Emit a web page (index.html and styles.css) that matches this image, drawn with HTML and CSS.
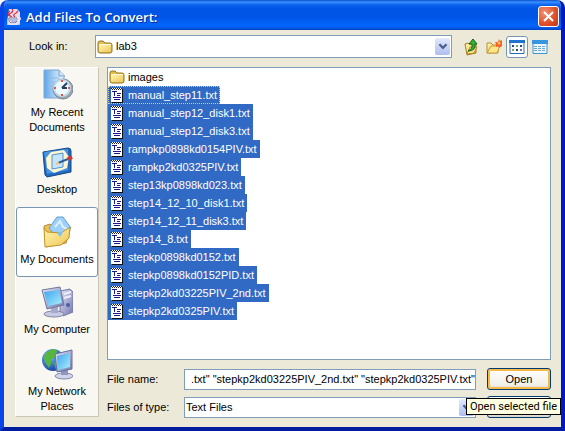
FILE: index.html
```html
<!DOCTYPE html>
<html lang="en">
<head>
<meta charset="utf-8">
<title>Add Files To Convert:</title>
<link rel="stylesheet" href="styles.css">
</head>
<body>
<svg class="defs" aria-hidden="true">
  <defs>
    <linearGradient id="gold" x1="0" y1="0" x2="1" y2="1"><stop offset="0" stop-color="#fff6ae"/><stop offset="1" stop-color="#efc65a"/></linearGradient>
    <linearGradient id="sky" x1="0" y1="0" x2="1" y2="1"><stop offset="0" stop-color="#3fa4ee"/><stop offset="1" stop-color="#a9f0fc"/></linearGradient>
    <linearGradient id="metal" x1="0" y1="0" x2="1" y2="1"><stop offset="0" stop-color="#e4e4f6"/><stop offset="1" stop-color="#7176ae"/></linearGradient>
    <linearGradient id="paper" x1="0" y1="0" x2="1" y2="0"><stop offset="0" stop-color="#5fa5e8"/><stop offset="1" stop-color="#f4faff"/></linearGradient>
    <radialGradient id="earth" cx=".35" cy=".3" r=".75"><stop offset="0" stop-color="#76bff5"/><stop offset="1" stop-color="#103f9d"/></radialGradient>
  </defs>
  <symbol id="folder" viewBox="0 0 16 14">
    <path d="M1 11V3Q1 1 3 1H6L8 3H13Q15 3 15 5V11Q15 13 13 13H3Q1 13 1 11Z" fill="#e4bd4c" stroke="#94762a"/>
    <path d="M2 5H14V11Q14 12 13 12H3Q2 12 2 11Z" fill="url(#gold)"/>
    <path d="M2 4.500H14" stroke="#fffbd4"/>
  </symbol>
  <symbol id="text" viewBox="0 0 14 16">
    <path d="M12 2h1v14H2v-1h10z" fill="#111"/>
    <path d="M1 1h11v14H1z" fill="#fff"/>
    <path d="M1 1h1v1H1zM3 1h1v1H3zM5 1h1v1H5zM7 1h1v1H7zM9 1h1v1H9zM11 1h1v1h-1zM2 2h1v1H2zM4 2h1v1H4zM6 2h1v1H6zM8 2h1v1H8zM10 2h1v1h-1z" fill="#222"/>
    <path d="M2 4h5v1H5v4H4V5H2zM7 6h4v1H7zM7 8h3v1H7zM3 10h8v1H3zM4 12h6v1H4z" fill="#19198c"/>
  </symbol>
  <symbol id="chevron" viewBox="0 0 15 19">
    <path d="M4 7l4 4 4-4" fill="none" stroke="#49618c" stroke-width="2.500"/>
  </symbol>
</svg>
<main class="window">
  <header class="titlebar">
    <svg class="cup" viewBox="0 0 16 16" aria-hidden="true">
      <path d="M3 0h8l3 3v11l-3 2H3l-2-3z" fill="#eed8e2"/>
      <path d="M6 8Q1 6 5 4Q8 2 6 0M9 8Q6 6 10 4L12 2M3 7Q1 4 4 2" fill="none" stroke="#d3304b" stroke-width="1.200"/>
      <path d="M3 9h8v3l-2 2H5l-2-2z" fill="#f4f5fc" stroke="#6f7bb2"/>
      <path d="M11 9h3q1 2-3 3M1 15h13" fill="none" stroke="#e8e9f4" stroke-width="1.500"/>
      <path d="M4 11h6M5 13h5" stroke="#7680b5"/>
    </svg>
    <h1>Add Files To Convert:</h1>
    <button class="close" type="button" aria-label="Close"><svg viewBox="0 0 19 19"><path d="M5 5l9 9M14 5l-9 9" stroke="#fff" stroke-width="2"/></svg></button>
  </header>
  <form class="content">
    <div class="lookin">
      <label for="look">Look in:</label>
      <div class="combo">
        <svg class="folder"><use href="#folder"/></svg>
        <select id="look"><option>lab3</option></select>
        <svg class="arrow"><use href="#chevron"/></svg>
      </div>
      <div class="tools">
        <button type="button" aria-label="Up one level"><svg viewBox="0 0 16 18">
          <path d="M2 6l3-1 1 1h7v9l-9 2z" fill="url(#gold)" stroke="#a37c24"/><path d="M4 16l3-7h7l-3 6z" fill="#ffe889" stroke="#b18a2c"/>
          <path d="M5 13q5-2 4-7H6l4-5 4 5h-2q1 7-7 7z" fill="#35b52e" stroke="#14631a"/>
        </svg></button>
        <button type="button" aria-label="New folder"><svg viewBox="0 0 16 18">
          <path d="M1 15V5h4l2 2h5v8z" fill="url(#gold)" stroke="#b98f32"/><path d="M1 15l4-7h9l-3 7z" fill="#ffe58a" stroke="#c49a3b"/>
          <path d="M13 1l1 2 2-1v6l-3 2-1-2-2 1V6L9 4h3z" fill="#f4622a"/><circle cx="13" cy="5" r="1.500" fill="#ffc35c"/>
        </svg></button>
        <button class="active" type="button" aria-label="List view"><svg viewBox="0 0 16 18">
          <path d="M1 2.500h14v13H1z" fill="#fff" stroke="#236db8"/><path d="M0 2h16v3H0z" fill="#1e74cf"/>
          <path d="M3 7h2v2H3zM11 7h2v2h-2zM7 11h2v2H7z" fill="#26478b"/><path d="M7 7h2v2H7zM3 11h2v2H3z" fill="#71a575"/><path d="M11 11h2v2h-2z" fill="#7b7187"/>
        </svg></button>
        <button type="button" aria-label="Details view"><svg viewBox="0 0 16 18">
          <path d="M1 2.500h14v13H1z" fill="#e9f5ff" stroke="#3e94d6"/><path d="M0 2h16v4H0z" fill="#3796df"/>
          <path d="M2 8.500h12M2 10.500h12M2 12.500h12" stroke="#72a8d0" stroke-dasharray="3 1"/>
        </svg></button>
      </div>
    </div>
    <nav class="places">
      <button type="button"><svg viewBox="0 0 32 32">
        <path d="M3 1h15l5 5v23H3z" fill="url(#paper)" stroke="#81a8d2"/><path d="M18 1v6h6" fill="#d3e6f9" stroke="#71a0d0"/><path d="M7 9h11M7 13h8M7 17h5" stroke="#90bbe4"/>
        <circle cx="22" cy="20" r="10" fill="#9da6b2" stroke="#7d8793"/><circle cx="21" cy="19" r="8" fill="#eefaff" stroke="#c0dbea" stroke-width="2"/>
        <path d="M21 19l5-5M21 19h5" stroke="#263f60" stroke-width="2"/><path d="M21 11v2M21 25v2M13 19h2M27 19h2" stroke="#e35742" stroke-width="2"/>
      </svg><span>My Recent<br>Documents</span></button>
      <button type="button"><svg viewBox="0 0 32 32">
        <path d="M2 6l25-4q3 0 3 3v21L6 31l-2-2z" fill="#236ac3" stroke="#174887"/><path d="M3 6l24-3v21L6 28z" fill="#4594e5"/>
        <path d="M10 6l13-2 5 7-2 11-13 5-7-5-1-10z" fill="#fff6cf"/><path d="M11 9l11-2v14l-11 2z" fill="#c5e5ff" stroke="#5293d1"/>
        <path d="M17 17l10-4" stroke="#2e5e9b" stroke-width="2"/><path d="M27 13l4-2" stroke="#c93b32" stroke-width="4"/><path d="M15 18l3-1" stroke="#f4c677" stroke-width="2"/>
      </svg><span>Desktop</span></button>
      <button class="active" type="button"><svg viewBox="0 0 32 32">
        <path d="M3 10l6-2 3 3h12l5 3-4 13-20 4z" fill="#eec150" stroke="#b98f35"/><path d="M8 12l8-11h6l8 11-11 14z" fill="#9dcff8" stroke="#659fd2"/>
        <path d="M14 11l5-6 3 6 4 2" fill="none" stroke="#d9f0ff" stroke-width="2"/><path d="M3 12l3 4 14 1 9-6-1 11-8 7-16 2z" fill="url(#gold)" stroke="#c09227"/><path d="M16 17l7-2-4 6z" fill="#85c1ee"/>
      </svg><span>My Documents</span></button>
      <button type="button"><svg viewBox="0 0 32 32">
        <path d="M19 5l10-2 3 3v20l-10 4-3-3z" fill="url(#metal)" stroke="#757aab"/><path d="M23 8l7-2M23 12l7-2" stroke="#eef" stroke-width="2"/><circle cx="27" cy="19" r="2" fill="#4c5da5"/>
        <ellipse cx="13" cy="28" rx="10" ry="3" fill="#c8cae3" stroke="#8286aa"/><path d="M10 20h7v7h-7z" fill="#a5a9cd"/>
        <path d="M1 4l18-3 4 18-17 4z" fill="url(#metal)" stroke="#6f789f"/><path d="M3 6l15-2 3 13-14 3z" fill="url(#sky)"/>
      </svg><span>My Computer</span></button>
      <button type="button"><svg viewBox="0 0 32 32">
        <circle cx="12" cy="12" r="11" fill="url(#earth)"/><path d="M5 5l6-4 6 2-3 3 1 3-5 2v4l-2 5-4-6-1-5zM13 15l4-2 2 5-4 4z" fill="#55b83b"/>
        <ellipse cx="23" cy="28" rx="9" ry="3" fill="#d1d3e7" stroke="#8388ae"/><path d="M20 20h7v7h-7z" fill="#9196c0"/>
        <path d="M14 6l17-4v19l-15 3z" fill="url(#metal)" stroke="#666fa0"/><path d="M16 8l13-3v14l-12 3z" fill="url(#sky)"/>
      </svg><span>My Network<br>Places</span></button>
    </nav>
    <ul class="files">
      <li><svg class="folder"><use href="#folder"/></svg>images</li>
      <li class="selected focus"><svg><use href="#text"/></svg>manual_step11.txt</li>
      <li class="selected"><svg><use href="#text"/></svg>manual_step12_disk1.txt</li>
      <li class="selected"><svg><use href="#text"/></svg>manual_step12_disk3.txt</li>
      <li class="selected"><svg><use href="#text"/></svg>rampkp0898kd0154PIV.txt</li>
      <li class="selected"><svg><use href="#text"/></svg>rampkp2kd0325PIV.txt</li>
      <li class="selected"><svg><use href="#text"/></svg>step13kp0898kd023.txt</li>
      <li class="selected"><svg><use href="#text"/></svg>step14_12_10_disk1.txt</li>
      <li class="selected"><svg><use href="#text"/></svg>step14_12_11_disk3.txt</li>
      <li class="selected"><svg><use href="#text"/></svg>step14_8.txt</li>
      <li class="selected"><svg><use href="#text"/></svg>stepkp0898kd0152.txt</li>
      <li class="selected"><svg><use href="#text"/></svg>stepkp0898kd0152PID.txt</li>
      <li class="selected"><svg><use href="#text"/></svg>stepkp2kd03225PIV_2nd.txt</li>
      <li class="selected"><svg><use href="#text"/></svg>stepkp2kd0325PIV.txt</li>
    </ul>
    <div class="fields">
      <label for="name">File name:</label>
      <input id="name" type="text" value='.txt" "stepkp2kd03225PIV_2nd.txt" "stepkp2kd0325PIV.txt"'>
      <button class="push default" type="button">Open</button>
      <label for="type">Files of type:</label>
      <div class="combo">
        <select id="type"><option>Text Files</option></select>
        <svg class="arrow"><use href="#chevron"/></svg>
      </div>
      <div class="cancel">
        <button class="push" type="button" aria-label="Cancel"></button>
        <div class="tooltip" role="tooltip">Open selected file</div>
      </div>
    </div>
  </form>
</main>
</body>
</html>
```
FILE: styles.css
```css
* { box-sizing: border-box; }
html { height: 100%; background: #fff; }
body { margin: 0; height: 100%; font: 11px/15px "Liberation Sans", Arial, sans-serif; color: #000; }
button, input, select { font: inherit; color: inherit; margin: 0; }
button { padding: 0; border: 0; background: none; }
svg { display: block; flex: none; }
.defs { position: absolute; width: 0; height: 0; }

.window {
  min-height: 100%;
  display: flex;
  flex-direction: column;
  border: 4px solid;
  border-top: 0;
  border-color: #0831d9 #0019c0 #001da0 #0844e8;
  border-radius: 8px 8px 0 0;
  background: #ece9d8;
  overflow: hidden;
}
.titlebar {
  height: 30px;
  flex: none;
  display: flex;
  align-items: center;
  gap: 4px;
  margin: 0 -4px;
  padding: 3px 6px 0;
  background: linear-gradient(#0a50cc 0, #3a91ff 2px, #0a62ee 5px, #0054e3 9px, #0055e8 17px, #0265fa 25px, #0560f4 27px, #0044c4 30px);
}
.titlebar h1 {
  flex: 1;
  margin: 0;
  color: #fff;
  font: 600 13px/18px "Open Sans", "Noto Sans", sans-serif;
  text-shadow: 1px 1px #0a2f92;
}
.cup { width: 16px; height: 16px; }
.close { width: 21px; height: 21px; border: 1px solid #fff; border-radius: 3px; background: radial-gradient(at 30% 30%, #ef9274, #df4d27 60%, #bb3816); }
.close svg { width: 19px; height: 19px; }

.content {
  flex: 1;
  display: grid;
  grid-template-columns: 84px 1fr;
  grid-template-rows: auto 1fr auto;
  column-gap: 8px;
  padding: 5px 10px 10px 11px;
}
.lookin { grid-column: 1 / -1; display: flex; align-items: center; height: 23px; margin-bottom: 9px; }
.lookin label { width: 80px; padding-left: 14px; }
.combo { flex: 1; min-width: 0; display: flex; align-items: center; height: 21px; padding: 0 1px; border: 1px solid #7f9db9; background: #fff; }
.combo select { flex: 1; min-width: 0; padding: 0; border: 0; outline: 0; appearance: none; background: none; }
.arrow { width: 15px; height: 17px; border-radius: 2px; background: linear-gradient(#e1eafe, #aebff0); }
.folder { width: 16px; height: 14px; }
.lookin .combo { height: 23px; }
.lookin .folder { margin-right: 3px; }
.tools { display: flex; align-items: center; gap: 1px; padding-left: 8px; }
.tools button { width: 22px; height: 22px; display: grid; place-items: center; }
.tools svg { width: 16px; height: 18px; }
.tools .active, .places .active { border: 1px solid #7895b4; border-radius: 3px; background: #fff; }

.places { grid-row: 2 / 4; display: grid; grid-template-rows: repeat(5, 1fr); border: 1px solid #fff; border-right-color: #c9c6b8; border-bottom-color: #c9c6b8; background: #f8f7f1; }
.places button { display: flex; flex-direction: column; align-items: center; justify-content: center; gap: 4px; padding-bottom: 1px; white-space: nowrap; }
.places svg { width: 32px; height: 32px; }

.files { margin: 0; padding: 0; list-style: none; border: 1px solid #7f9db9; background: #fff; line-height: 18px; }
.files li { display: flex; align-items: center; gap: 4px; width: fit-content; height: 18px; padding: 0 3px 0 2px; }
.files li svg { width: 14px; height: 16px; }
.files li .folder { width: 16px; margin: 0 -1px; }
.files .selected { background: #316ac5; color: #fff; }
.files .focus { outline: 1px dotted #d8cd99; outline-offset: -1px; }

.fields { display: grid; grid-template-columns: 77px 1fr 75px; row-gap: 6px; align-items: center; margin-bottom: -1px; padding-top: 8px; }
.fields input { min-width: 0; height: 21px; padding: 0 0 0 6px; border: 1px solid #7f9db9; border-radius: 0; outline: 0; background: #fff; }
.push { display: block; width: 64px; height: 22px; border: 1px solid #003c74; border-radius: 3px; background: linear-gradient(#fff, #f1f0e8 80%, #d8d1c5); }
.push.default { box-shadow: inset 0 0 0 2px #f5b947; }
.fields > .push, .cancel { justify-self: end; }
.cancel { position: relative; }
.tooltip { position: absolute; right: -10px; top: 2px; height: 17px; padding: 0 3px; border: 1px solid #000; background: #ffffe1; font: 11px/15px Roboto, "Open Sans", sans-serif; white-space: nowrap; }
```
